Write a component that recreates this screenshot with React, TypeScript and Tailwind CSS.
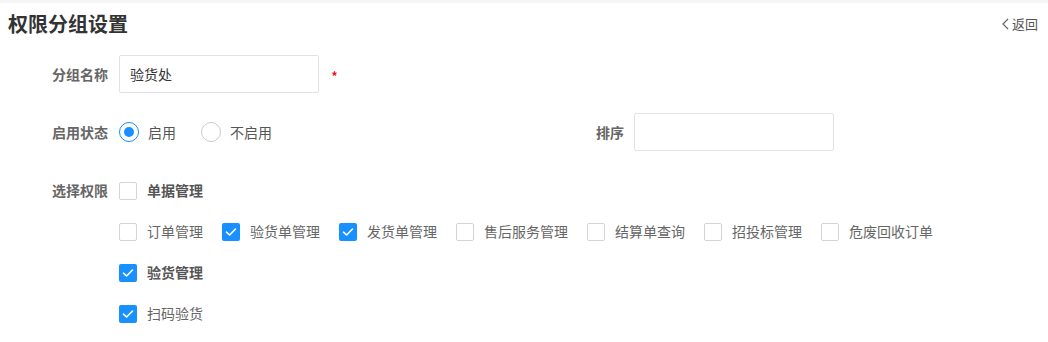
import React from 'react';

const font = { fontFamily: '"Noto Sans CJK SC", "Noto Sans", sans-serif' };

const Check: React.FC<{ checked?: boolean }> = ({ checked }) =>
  checked ? (
    <span className="w-[18px] h-[18px] rounded-[2px] bg-[#1890ff] flex items-center justify-center shrink-0">
      <svg width="12" height="10" viewBox="0 0 12 10" fill="none">
        <path d="M1.5 5.2 L4.6 8 L10.5 2" stroke="white" strokeWidth="1.6" strokeLinecap="round" strokeLinejoin="round" />
      </svg>
    </span>
  ) : (
    <span className="w-[18px] h-[18px] rounded-[2px] border border-[#d4d4d4] bg-white shrink-0" />
  );

const CheckItem: React.FC<{ label: string; checked?: boolean; bold?: boolean; last?: boolean }> = ({
  label,
  checked,
  bold,
  last,
}) => (
  <label className={`flex items-center ${last ? '' : 'mr-[19px]'}`}>
    <Check checked={checked} />
    <span className={`ml-[10px] text-[14px] ${bold ? 'font-semibold text-[#555]' : 'text-[#666]'}`}>{label}</span>
  </label>
);

const Radio: React.FC<{ label: string; checked?: boolean }> = ({ label, checked }) => (
  <label className="flex items-center mr-[25px]">
    {checked ? (
      <span className="w-[20px] h-[20px] rounded-full border-[1.5px] border-[#1890ff] flex items-center justify-center">
        <span className="w-[10px] h-[10px] rounded-full bg-[#1890ff]" />
      </span>
    ) : (
      <span className="w-[20px] h-[20px] rounded-full border-[1.5px] border-[#cccccc]" />
    )}
    <span className="ml-[9px] text-[14px] text-[#555]">{label}</span>
  </label>
);

const Label: React.FC<{ children: React.ReactNode }> = ({ children }) => (
  <div className="w-[108px] text-right text-[14px] font-semibold text-[#666] shrink-0">{children}</div>
);

const docs = [
  { label: '订单管理', checked: false },
  { label: '验货单管理', checked: true },
  { label: '发货单管理', checked: true },
  { label: '售后服务管理', checked: false },
  { label: '结算单查询', checked: false },
  { label: '招投标管理', checked: false },
  { label: '危废回收订单', checked: false },
];

export default function App() {
  return (
    <div className="w-[1048px] h-[342px] bg-white overflow-hidden" style={font}>
      <div className="h-[3px] bg-[#f5f5f5]" />
      <div className="h-[42px] flex items-center justify-between pl-2 pr-[10px]">
        <h1 className="text-[20px] font-bold text-[#333]">权限分组设置</h1>
        <button className="flex items-center text-[13px] text-[#555]">
          <svg width="9" height="12" viewBox="0 0 9 12" fill="none" className="mr-[2px]">
            <path d="M7 1 L2 6 L7 11" stroke="#666" strokeWidth="1.2" />
          </svg>
          返回
        </button>
      </div>

      <div className="mt-[10px] flex items-center h-[38px]">
        <Label>分组名称</Label>
        <div className="ml-[11px] w-[200px] h-[38px] border border-[#e2e2e2] rounded-[2px] flex items-center px-[10px] text-[14px] text-[#333]">
          验货处
        </div>
        <span className="ml-[12px] text-[15px] text-[#e60012] leading-none mt-[4px]">*</span>
      </div>

      <div className="mt-[20px] flex items-center h-[38px]">
        <Label>启用状态</Label>
        <div className="ml-[11px] w-[477px] flex items-center">
          <Radio label="启用" checked />
          <Radio label="不启用" />
        </div>
        <div className="text-[14px] font-semibold text-[#666]">排序</div>
        <div className="ml-[10px] w-[200px] h-[38px] border border-[#e2e2e2] rounded-[2px]" />
      </div>

      <div className="mt-[19px] flex">
        <div className="h-[41px] flex items-center">
          <Label>选择权限</Label>
        </div>
        <div className="ml-[11px] flex flex-col">
          <div className="h-[41px] flex items-center">
            <CheckItem label="单据管理" bold />
          </div>
          <div className="h-[41px] flex items-center">
            {docs.map((d, i) => (
              <CheckItem key={d.label} label={d.label} checked={d.checked} last={i === docs.length - 1} />
            ))}
          </div>
          <div className="h-[41px] flex items-center">
            <CheckItem label="验货管理" checked bold />
          </div>
          <div className="h-[41px] flex items-center">
            <CheckItem label="扫码验货" checked />
          </div>
        </div>
      </div>
    </div>
  );
}
